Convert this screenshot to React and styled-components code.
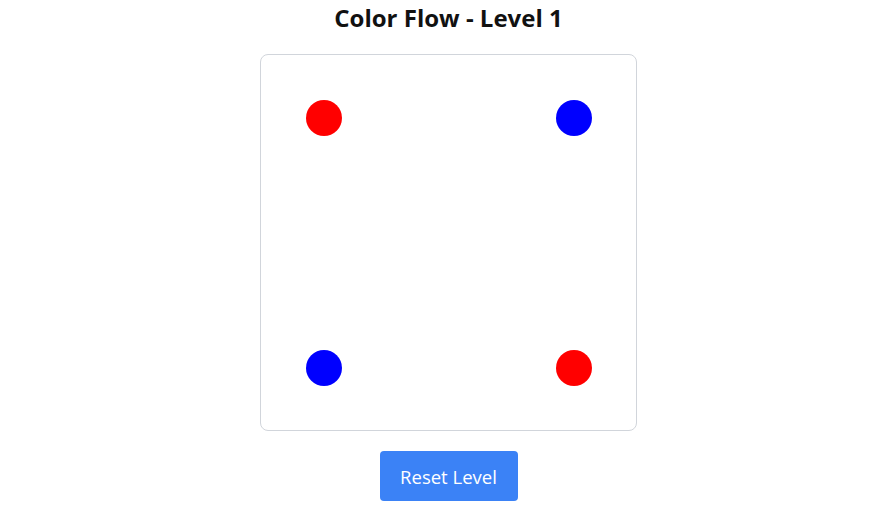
import React, { useState } from 'react';
import styled, { createGlobalStyle } from 'styled-components';

const GlobalStyle = createGlobalStyle`
  body {
    margin: 0;
    background: #fff;
    font-family: "Open Sans", "Noto Sans", sans-serif;
  }
`;

const levels = [
  {
    size: 3,
    dots: [
      { row: 0, col: 0, color: '#ff0000' },
      { row: 0, col: 2, color: '#0000ff' },
      { row: 2, col: 0, color: '#0000ff' },
      { row: 2, col: 2, color: '#ff0000' },
    ],
  },
];

export default function App() {
  const [level] = useState(0);
  const current = levels[level];
  const cells = [];
  for (let r = 0; r < current.size; r++) {
    for (let c = 0; c < current.size; c++) {
      const dot = current.dots.find(d => d.row === r && d.col === c);
      cells.push(
        <Cell key={`${r}-${c}`}>
          {dot && <Dot color={dot.color} />}
        </Cell>
      );
    }
  }
  return (
    <Page>
      <GlobalStyle />
      <Title>Color Flow - Level {level + 1}</Title>
      <Board size={current.size}>{cells}</Board>
      <ResetButton>Reset Level</ResetButton>
    </Page>
  );
}

const Page = styled.div`
  display: flex;
  flex-direction: column;
  align-items: center;
  padding: 2px 0 0 5px;
`;

const Title = styled.h1`
  margin: 0 0 20px;
  font-size: 24px;
  line-height: 32px;
  font-weight: 700;
  color: #111;
`;

const Board = styled.div`
  display: grid;
  grid-template-columns: repeat(${p => p.size}, 125px);
  grid-template-rows: repeat(${p => p.size}, 125px);
  border: 1px solid #d1d5db;
  border-radius: 8px;
  background: #fff;
`;

const Cell = styled.div`
  display: flex;
  align-items: center;
  justify-content: center;
`;

const Dot = styled.div`
  width: 36px;
  height: 36px;
  border-radius: 50%;
  background: ${p => p.color};
`;

const ResetButton = styled.button`
  margin-top: 20px;
  width: 138px;
  height: 50px;
  border: none;
  border-radius: 4px;
  background: #3b82f6;
  color: #fff;
  font-family: "Open Sans", "Noto Sans", sans-serif;
  font-size: 18.5px;
  cursor: pointer;
`;
